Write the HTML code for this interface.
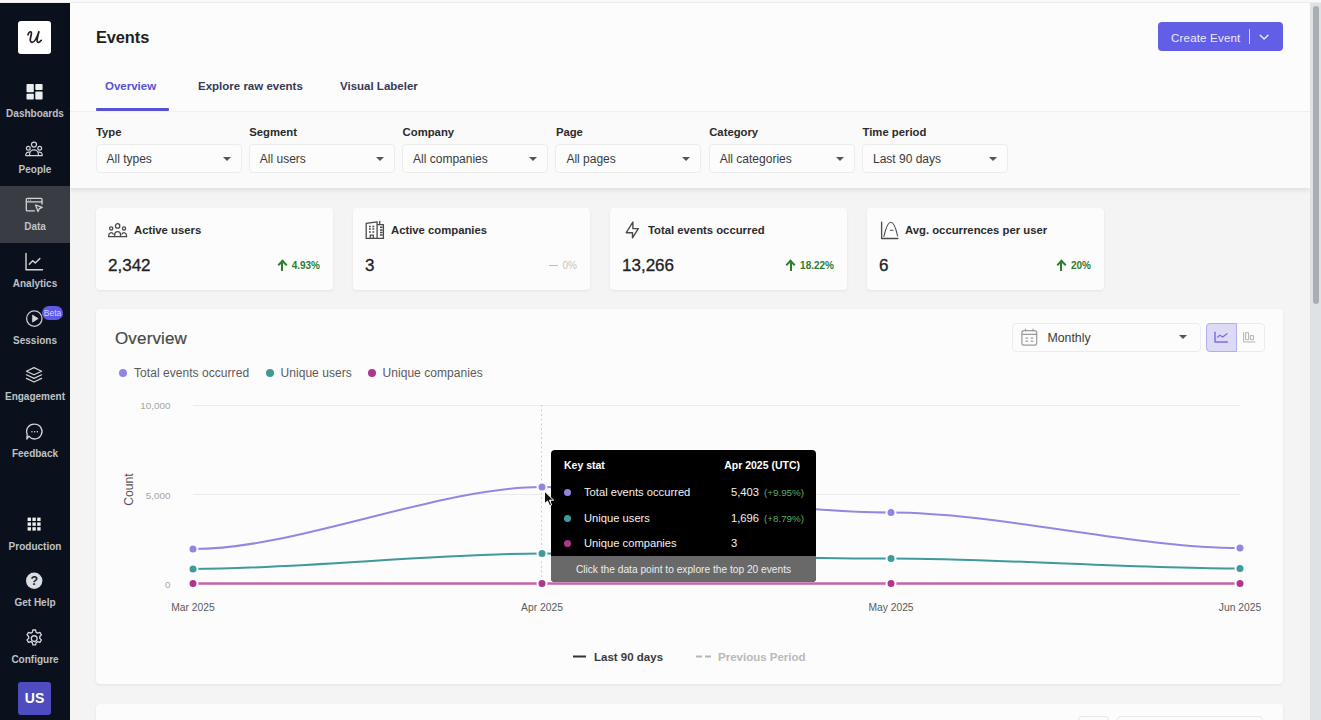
<!DOCTYPE html>
<html>
<head>
<meta charset="utf-8">
<title>Events</title>
<style>
*{box-sizing:border-box;margin:0;padding:0}
html,body{width:1321px;height:720px;overflow:hidden;background:#f4f4f4;font-family:"Liberation Sans",sans-serif;color:#222}
.abs{position:absolute}
#topstrip{position:absolute;left:0;top:0;width:1321px;height:3px;background:#f9f9f9;border-bottom:1px solid #ececec;z-index:50}
/* sidebar */
#side{position:absolute;left:0;top:3px;width:69.500px;height:717px;background:#0b111c}
#side .logo{position:absolute;left:18px;top:18px;width:33px;height:33px;background:#fff;border-radius:3px;text-align:center;font-family:"Liberation Serif",serif;font-style:italic;font-weight:bold;font-size:26px;line-height:28px;color:#222}
#side .active{position:absolute;left:0;top:183px;width:70px;height:57px;background:#393c42}
#side .lbl{position:absolute;left:0;width:70px;text-align:center;font-size:10px;font-weight:bold;color:#bfc1c6;letter-spacing:0;margin-top:1px;line-height:12px}
#side svg{position:absolute}
#side .us{position:absolute;left:18px;top:679px;width:33px;height:33px;background:#4f4cc0;border-radius:3px;color:#fff;font-weight:bold;font-size:14px;line-height:33px;text-align:center}
#side .beta{position:absolute;left:42px;top:302.500px;width:21px;height:14px;border-radius:7px;background:#5f58e8;color:#d4d1fa;font-size:8.5px;line-height:14px;text-align:center}
/* scrollbar */
#sbar{position:absolute;left:1310px;top:3px;width:11px;height:717px;background:#dfe2e5}
#sbar i{position:absolute;left:2.500px;top:3px;width:6px;height:298px;border-radius:3px;background:#a9aeb5}
/* header */
#head{position:absolute;left:70px;top:3px;width:1240px;height:185px;background:#fcfcfc;box-shadow:0 2px 5px rgba(0,0,0,.10)}
#head .line{position:absolute;left:0;top:108px;width:1240px;height:1px;background:#f0f0f0}
#head .filters{position:absolute;left:0;top:109px;width:1239px;height:76px;background:#fafafa}
h1{position:absolute;left:26px;top:24px;font-size:16.400px;font-weight:bold;color:#1f1f1f;letter-spacing:-0.1px;line-height:20px}
.btn{position:absolute;left:1088px;top:19px;width:125px;height:29px;background:#625ee5;border-radius:4px;color:#ecebfd;font-size:11.600px;line-height:31px}
.btn span{position:absolute;left:13px;top:0;letter-spacing:0.15px}
.btn i{position:absolute;left:90.500px;top:7px;width:1.200px;height:15px;background:#d5d3fb}
.btn svg{position:absolute;left:99.300px;top:10px}
.tab{position:absolute;top:75px;font-size:11.5px;font-weight:bold;color:#363a55;line-height:16px;white-space:nowrap}
.tab.on{color:#5752d1}
.tabline{position:absolute;left:26px;top:105px;width:73px;height:3px;background:#5752d1;border-radius:1px}
.flabel{position:absolute;top:122px;font-size:11.3px;font-weight:bold;color:#2a2a2a;line-height:14px;white-space:nowrap}
.sel{position:absolute;top:140.500px;width:146px;height:29.500px;border:1px solid #ececec;border-radius:4px;background:#fcfcfc;font-size:12px;line-height:28px;color:#3a3a3a;padding-left:10px;white-space:nowrap}
.sel:after,.caret{content:"";position:absolute;right:10px;top:12px;border-left:4px solid transparent;border-right:4px solid transparent;border-top:4px solid #555}
/* cards */
.card{position:absolute;background:#fcfcfc;border-radius:4px;box-shadow:0 1px 3px rgba(0,0,0,.07)}
.stat{top:208px;width:237px;height:82px}
.stat .t{position:absolute;left:38px;top:15px;font-size:11.300px;font-weight:bold;color:#2b2b2b;line-height:15px;white-space:nowrap}
.stat .v{position:absolute;left:12px;top:48px;font-size:17px;color:#222;line-height:20px;-webkit-text-stroke:0.3px #222}
.stat .d{position:absolute;right:13px;top:52px;font-size:10px;font-weight:bold;color:#2e7d32;line-height:12px;white-space:nowrap}
.stat svg{position:absolute}

#ov h2{position:absolute;left:19px;top:19.500px;font-size:17px;font-weight:normal;color:#484848;line-height:20px;letter-spacing:0.150px;-webkit-text-stroke:0.200px #484848}
.lg{position:absolute;top:56.500px;font-size:12px;letter-spacing:0.050px;color:#5a5a5a;line-height:14px;white-space:nowrap}
.lg i{position:absolute;left:-14.700px;top:3px;width:8px;height:8px;border-radius:50%}
.msel{position:absolute;left:915.500px;top:13.500px;width:189.500px;height:29.500px;border:1px solid #ececec;border-radius:4px;background:#fcfcfc;font-size:12.300px;line-height:29px;color:#3a3a3a;padding-left:35px}
.tog{position:absolute;left:1110px;top:13.500px;width:59px;height:29.500px;border:1px solid #ebebeb;border-radius:4px;background:#fcfcfc}
.tog .a{position:absolute;left:-1px;top:-1px;width:30.500px;height:29.500px;background:#dddaf6;border:1px solid #b3aef0;border-radius:4px 0 0 4px}
#chart{position:absolute;left:0;top:0}
#tip{position:absolute;left:551px;top:450px;width:265px;height:132px;border-radius:4px;background:#000;overflow:hidden;color:#f2f2f2;font-size:11.200px}
#tip .f{position:absolute;left:0;top:106px;width:265px;height:26px;background:#696969;color:#ececec;font-size:10.200px;line-height:28px;text-align:center}
#tip .r{position:absolute;left:33px;line-height:14px;white-space:nowrap}
#tip .n{position:absolute;left:180px;line-height:14px;white-space:nowrap}
#tip .n em{font-style:normal;color:#5fae6a;font-size:9.800px;margin-left:5px}
#tip .h{position:absolute;top:8px;font-weight:bold;font-size:10.500px;line-height:14px;color:#fff;white-space:nowrap}
#tip i{position:absolute;left:13px;width:7px;height:7px;margin-top:-1.500px;border-radius:50%}

.d .up{display:inline-block;position:relative;width:9px;height:10px;margin-right:5px;vertical-align:-1px}
.d .up:before{content:"";position:absolute;left:3.500px;top:1px;width:2px;height:9.500px;background:#2e7d32}
.d .up:after{content:"";position:absolute;left:1.200px;top:1.200px;width:5px;height:5px;border-left:2px solid #2e7d32;border-top:2px solid #2e7d32;transform:rotate(45deg);transform-origin:center}
.d.z{color:#c4c4c4;font-weight:normal}
.d .dash{display:inline-block;width:9px;height:1.500px;background:#bdbdbd;margin-right:5px;vertical-align:3px}
</style>
</head>
<body>
<div id="topstrip"></div>
<div id="side">
  <div class="logo"><svg width="33" height="33" viewBox="18 21 33 33" style="left:0;top:0" fill="none" stroke="#1f1f1f" stroke-width="1.700" stroke-linecap="round" stroke-linejoin="round"><path d="M28 34.800C28.600 32.700 29.800 31.600 30.800 31.800C32 32 31.300 34.500 30.700 37C30.100 39.500 29.800 42.300 32.100 42.400C34.600 42.500 37.200 37 38.900 31.800C38.100 35 36.600 40 37.300 41.600C38 43 39.800 42.200 41.300 40.300"/></svg></div>
  <div class="active"></div>
  <svg width="70" height="717" viewBox="0 3 70 717" style="left:0;top:0" fill="none" stroke="#d3d4d8" stroke-width="1.3" stroke-linecap="round" stroke-linejoin="round">
    <!-- dashboards -->
    <g fill="#eceded" stroke="none">
      <rect x="26.5" y="84" width="7.3" height="8.2" rx="0.8"/><rect x="35.3" y="84" width="7.3" height="6" rx="0.8"/>
      <rect x="26.5" y="93.8" width="7.3" height="5.8" rx="0.8"/><rect x="35.3" y="91.6" width="7.3" height="8" rx="0.8"/>
    </g>
    <!-- people -->
    <g stroke-width="1.2">
      <circle cx="34" cy="144.6" r="2.5"/><circle cx="28.3" cy="148.3" r="1.9"/><circle cx="39.7" cy="148.3" r="1.9"/>
      <path d="M29.6 155.6v-1.4a4.4 4.4 0 0 1 8.8 0v1.4z"/>
      <path d="M29.4 152.2a3 3 0 0 0-3.6 2.2v1.2h3.8M38.6 152.2a3 3 0 0 1 3.6 2.2v1.2h-3.8"/>
    </g>
    <!-- data -->
    <g stroke-width="1.3">
      <path d="M34.5 210.8h-7.3a0.9 0.9 0 0 1-.9-.9v-10.6a0.9 0.9 0 0 1 .9-.9h13.9a0.9 0.9 0 0 1 .9.9v4.7"/>
      <path d="M26.5 201.8h15.4"/>
      <path d="M35.6 205l6.6 2.4-2.9 1.3-1.3 2.9z"/>
      <path d="M28.6 200.1h.1M30.6 200.1h.1" stroke-width="1"/>
    </g>
    <!-- analytics -->
    <g stroke-width="1.4">
      <path d="M26 253.5v16.3h16.5"/>
      <path d="M29.3 264.3l3.4-3.6 2.6 2.2 4.6-4.4"/>
    </g>
    <!-- sessions -->
    <g stroke-width="1.3">
      <circle cx="34.300" cy="318.600" r="7.700" stroke="#c9cacd"/>
      <path d="M32.800 315.300l5.300 3.300-5.300 3.300z" fill="#d6d7da" stroke="#d6d7da" stroke-width="0.800"/>
    </g>
    <!-- engagement -->
    <g stroke-width="1.2">
      <path d="M34 367.6l7.6 3.6-7.6 3.6-7.6-3.6z"/>
      <path d="M26.4 374.8l7.600 3.600 7.600-3.600M26.400 378.400l7.600 3.600 7.600-3.600"/>
    </g>
    <!-- feedback -->
    <g stroke-width="1.3">
      <path transform="translate(0.400 0)" d="M34.200 424.200a7.400 7.400 0 1 1-5.800 12.000l-2.000 2.800 .4-4.600a7.400 7.400 0 0 1 7.400-10.200z"/>
      <path d="M31.900 431.700h.1M34.600 431.700h.1M37.300 431.700h.1" stroke-width="1.400"/>
    </g>
    <!-- production -->
    <g fill="#eceded" stroke="none">
      <rect x="27.6" y="517.6" width="3.4" height="3.400"/><rect x="32.400" y="517.6" width="3.400" height="3.400"/><rect x="37.200" y="517.6" width="3.400" height="3.400"/>
      <rect x="27.6" y="522.400" width="3.400" height="3.400"/><rect x="32.400" y="522.400" width="3.400" height="3.400"/><rect x="37.200" y="522.400" width="3.400" height="3.400"/>
      <rect x="27.6" y="527.200" width="3.400" height="3.400"/><rect x="32.400" y="527.200" width="3.400" height="3.400"/><rect x="37.200" y="527.200" width="3.400" height="3.400"/>
    </g>
    <!-- help -->
    <circle cx="34.200" cy="580.800" r="8.200" fill="#dcdde0" stroke="none"/>
    <text x="34.200" y="585.300" text-anchor="middle" font-family="Liberation Sans" font-weight="bold" font-size="12.500" fill="#1a1f2a" stroke="none">?</text>
    <!-- configure -->
    <g stroke-width="1.250" transform="translate(34.200 638.600) scale(1.070) translate(-34.200 -637.600)">
      <circle cx="34.200" cy="637.600" r="2.700"/>
      <path d="M32.900 629.600h2.600l.5 2.100 1.500.8 2.000-.7 1.400 2.300-1.500 1.500v1.800l1.500 1.500-1.400 2.300-2.000-.7-1.500.8-.5 2.100h-2.600l-.5-2.100-1.500-.8-2.000.7-1.400-2.300 1.500-1.500v-1.800l-1.500-1.500 1.400-2.300 2.000.7 1.500-.8z"/>
    </g>
  </svg>
  <div class="lbl" style="top:104px">Dashboards</div>
  <div class="lbl" style="top:160px">People</div>
  <div class="lbl" style="top:217px">Data</div>
  <div class="lbl" style="top:274px">Analytics</div>
  <div class="lbl" style="top:331px">Sessions</div>
  <div class="lbl" style="top:387px">Engagement</div>
  <div class="lbl" style="top:444px">Feedback</div>
  <div class="lbl" style="top:537px">Production</div>
  <div class="lbl" style="top:593px">Get Help</div>
  <div class="lbl" style="top:650px">Configure</div>
  <div class="beta">Beta</div>
  <div class="us">US</div>
</div>
<div id="head">
  <h1>Events</h1>
  <div class="btn"><span>Create Event</span><i></i><svg width="14" height="10" viewBox="0 0 14 10" fill="none" stroke="#eeedff" stroke-width="1.400" stroke-linecap="round" stroke-linejoin="round"><path d="M3.200 3.200l3.900 3.800 3.900-3.800"/></svg></div>
  <div class="line"></div>
  <div class="filters"></div>
  <div class="tab on" style="left:35px">Overview</div>
  <div class="tab" style="left:128px">Explore raw events</div>
  <div class="tab" style="left:270px">Visual Labeler</div>
  <div class="tabline"></div>
  <div class="flabel" style="left:26.0px">Type</div>
  <div class="flabel" style="left:179.3px">Segment</div>
  <div class="flabel" style="left:332.6px">Company</div>
  <div class="flabel" style="left:485.9px">Page</div>
  <div class="flabel" style="left:639.2px">Category</div>
  <div class="flabel" style="left:792.5px">Time period</div>
  <div class="sel" style="left:25.5px">All types</div>
  <div class="sel" style="left:178.8px">All users</div>
  <div class="sel" style="left:332.1px">All companies</div>
  <div class="sel" style="left:485.4px">All pages</div>
  <div class="sel" style="left:638.7px">All categories</div>
  <div class="sel" style="left:792.0px">Last 90 days</div>
</div>
<div class="card stat" style="left:96px">
  <svg style="left:10px;top:10px" width="24" height="24" viewBox="0 0 24 24" fill="none" stroke="#4a4a4a" stroke-width="1.300" stroke-linecap="round" stroke-linejoin="round"><circle cx="11.600" cy="7.900" r="2.200"/><circle cx="5.200" cy="10.400" r="1.600"/><circle cx="18" cy="10.400" r="1.600"/><path d="M8.700 18.600v-2a2.900 2.900 0 0 1 5.800 0v2"/><path d="M2.800 18.600v-1.600a2.300 2.300 0 0 1 4.400-.9M20.400 18.600v-1.600a2.300 2.300 0 0 0-4.400-.9"/><path d="M2.500 18.600h18.200"/></svg><div class="t">Active users</div><div class="v">2,342</div><div class="d"><b class="up"></b>4.93%</div>
</div>
<div class="card stat" style="left:353px">
  <svg style="left:10px;top:10px" width="24" height="24" viewBox="0 0 24 24" fill="none" stroke="#4a4a4a" stroke-width="1.300" stroke-linejoin="round"><path d="M3.200 20.400V5.400l10.900-1.600V20.400zM14.100 6.600h6.300v13.800h-6.300M16.700 6.600V2.900"/><path d="M6 8.400h1.800M9.400 8.400h1.800M6 11.100h1.800M9.400 11.100h1.800M6 13.900h1.800M9.400 13.900h1.800M17 9.200h2.600M17 11.900h2.600M17 14.500h2.600M17 17.100h2.600" stroke-width="1.500"/><path d="M7.300 20.400v-3.200h3v3.200"/></svg><div class="t">Active companies</div><div class="v">3</div><div class="d z"><b class="dash"></b>0%</div>
</div>
<div class="card stat" style="left:610px">
  <svg style="left:10px;top:10px" width="24" height="24" viewBox="0 0 24 24" fill="none" stroke="#4a4a4a" stroke-width="1.400" stroke-linejoin="round"><path d="M12.900 4L6.300 14.700h6.200v5.200l5.800-9.300h-5.400z"/></svg><div class="t">Total events occurred</div><div class="v">13,266</div><div class="d"><b class="up"></b>18.22%</div>
</div>
<div class="card stat" style="left:867px">
  <svg style="left:10px;top:10px" width="24" height="24" viewBox="0 0 24 24" fill="none" stroke="#4a4a4a" stroke-width="1.300" stroke-linecap="round" stroke-linejoin="round"><path d="M4.600 4.200V20.500H20.900"/><path d="M6.900 18.400C8.800 10 10.600 4.300 13.800 4.300S18.800 10 20.600 18" stroke-width="1.100"/><path d="M13.400 12.300h2.600" stroke-width="1"/></svg><div class="t">Avg. occurrences per user</div><div class="v">6</div><div class="d"><b class="up"></b>20%</div>
</div>
<div class="card" id="ov" style="left:96px;top:309px;width:1187px;height:375px">
  <h2>Overview</h2>
  <div class="lg" style="left:38px"><i style="background:#8f86e0"></i>Total events occurred</div>
  <div class="lg" style="left:184.500px"><i style="background:#3f9a9a"></i>Unique users</div>
  <div class="lg" style="left:286.500px"><i style="background:#b0358c"></i>Unique companies</div>
  <div class="msel">Monthly<b class="caret" style="right:13px;top:11.500px"></b></div>
  <div class="tog"><div class="a"></div></div>
</div>
<svg id="chart" width="1321" height="720" viewBox="0 0 1321 720" font-family="Liberation Sans">
  <g stroke="#ebebeb" stroke-width="1">
    <path d="M193 405.500H1240M193 494.500H1240M193 584.500H1240"/>
  </g>
  <path d="M541.500 405V584" stroke="#cfcfcf" stroke-width="1" stroke-dasharray="1.800 2.800"/>
  <g font-size="9.900" fill="#a6a6a6" text-anchor="end">
    <text x="170.500" y="409">10,000</text><text x="170.500" y="498.500">5,000</text><text x="170.500" y="587.500">0</text>
  </g>
  <text transform="translate(132.500 489.500) rotate(-90)" font-size="12.200" fill="#555" text-anchor="middle">Count</text>
  <g font-size="10.300" fill="#5a5a5a" text-anchor="middle">
    <text x="193" y="610.500">Mar 2025</text><text x="542" y="610.500">Apr 2025</text><text x="891" y="610.500">May 2025</text><text x="1240" y="610.500">Jun 2025</text>
  </g>
  <g fill="none" stroke-width="2">
    <path d="M193 549C297.7 549 437.3 487 542 487C646.7 487 786.3 512.5 891 512.5C995.7 512.5 1135.3 548 1240 548" stroke="#9188e2"/>
    <path d="M193 569C297.7 569 437.3 553.5 542 553.5C646.7 553.5 786.3 558.5 891 558.5C995.7 558.5 1135.3 568.5 1240 568.5" stroke="#3f9a9a"/>
    <path d="M193 583.500H1240" stroke="#c964ad" stroke-width="2.300"/>
  </g>
  <g stroke="#fcfcfc" stroke-width="2">
    <g fill="#8f86e0"><circle cx="193" cy="549" r="4.500"/><circle cx="542" cy="487" r="4.500"/><circle cx="891" cy="512.500" r="4.500"/><circle cx="1240" cy="548" r="4.500"/></g>
    <g fill="#3f9a9a"><circle cx="193" cy="569" r="4.500"/><circle cx="542" cy="553.500" r="4.500"/><circle cx="891" cy="558.500" r="4.500"/><circle cx="1240" cy="568.500" r="4.500"/></g>
    <g fill="#b0358c"><circle cx="193" cy="583.500" r="4.500"/><circle cx="542" cy="583.500" r="4.500"/><circle cx="891" cy="583.500" r="4.500"/><circle cx="1240" cy="583.500" r="4.500"/></g>
  </g>
  <g fill="none" stroke="#9c9c9c" stroke-width="1.200" stroke-linejoin="round" stroke-linecap="round">
    <rect x="1021.900" y="330.600" width="14.800" height="14.500" rx="2.200"/><path d="M1021.900 334.400h14.800M1025.500 329.200v1.600M1033 329.200v1.600"/>
    <path d="M1026 338.100h1.600M1031.200 338.100h1.600M1026 341.200h1.600M1031.200 341.200h1.600" stroke-width="1.300"/>
  </g>
  <g fill="none" stroke="#7a72de" stroke-width="1.500" stroke-linejoin="round" stroke-linecap="round">
    <path d="M1215 332.200V342H1227.300"/><path d="M1217.600 337l2.300-1.700 2.800 1.700 4.300-3.300" stroke-width="1.300"/>
  </g>
  <g fill="none" stroke="#b3b3b3" stroke-width="1" stroke-linejoin="round">
    <path d="M1243.600 332.200V342H1255.300"/><rect x="1245.600" y="332.700" width="3" height="7"/><rect x="1250.300" y="335.600" width="3.200" height="4.100"/>
  </g>
  <path d="M573 656.500H586" stroke="#333" stroke-width="2"/>
  <text x="594" y="660.500" font-size="11.500" font-weight="bold" fill="#3a3a3a">Last 90 days</text>
  <path d="M696 656.500H702M705 656.500H711" stroke="#b5b5b5" stroke-width="2"/>
  <text x="718" y="660.500" font-size="11.500" font-weight="bold" fill="#b9b9b9">Previous Period</text>
</svg>
<div id="tip">
  <div class="h" style="left:13px">Key stat</div><div class="h" style="right:16px">Apr 2025 (UTC)</div>
  <i style="top:40px;background:#8f86e0"></i><div class="r" style="top:35px">Total events occurred</div><div class="n" style="top:35px">5,403<em>(+9.95%)</em></div>
  <i style="top:66px;background:#3f9a9a"></i><div class="r" style="top:61px">Unique users</div><div class="n" style="top:61px">1,696<em>(+8.79%)</em></div>
  <i style="top:91px;background:#b0358c"></i><div class="r" style="top:86px">Unique companies</div><div class="n" style="top:86px">3</div>
  <div class="f">Click the data point to explore the top 20 events</div>
</div>
<svg class="abs" style="left:543px;top:490px" width="12" height="18" viewBox="0 0 12 18"><path d="M1.500 1.200v12.600l3-2.800 2.100 4.800 2-.9-2.100-4.700h4.200z" fill="#111" stroke="#fff" stroke-width="1"/></svg>
<div class="card" style="left:96px;top:703.500px;width:1187px;height:60px"><div class="abs" style="left:982px;top:12.500px;width:31px;height:29px;border:1px solid #e6e6e6;border-radius:4px"></div><div class="abs" style="left:1021px;top:12.500px;width:146px;height:29px;border:1px solid #e9e9e9;border-radius:4px"></div></div>
<div id="sbar"><i></i></div>
</body>
</html>
